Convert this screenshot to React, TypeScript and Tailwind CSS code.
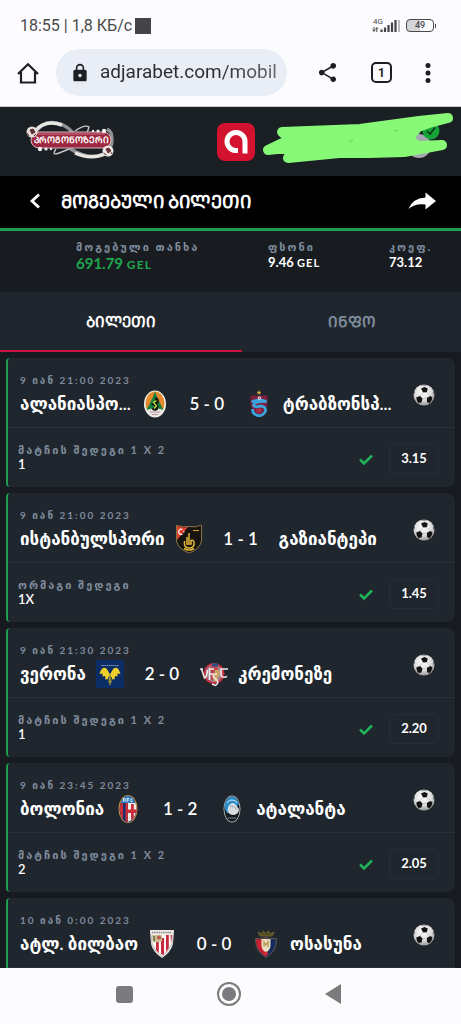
import * as React from "react";
import { useState } from "react";
import { MdLock, MdShare } from "react-icons/md";

interface Team {
  name: string;
  crest?: React.ReactNode;
}

interface Match {
  date: string;
  home: Team;
  away: Team;
  score: string;
  bet?: { market: string; pick: string; odds: string };
}

const Alanya = () => (
  <svg viewBox="0 0 28 28" className="h-7 w-7">
    <ellipse cx="14" cy="14" rx="11" ry="13.5" fill="#f4f4ee" />
    <ellipse cx="14" cy="13.500" rx="9.500" ry="12" fill="#e58a2c" />
    <path d="M5 19 Q14 15 23 19 Q20 27 14 27 Q8 27 5 19Z" fill="#e9e4e2" />
    <path d="M14 1.500 L16.500 8 L19 13 L22.500 20 Q14 16.500 5.500 20 L9 13 L11.500 8Z" fill="#177f3c" />
    <path d="M14 9 Q17 9 16 12 L13 14 Q17 16 15.500 18.500 Q13 20 11.800 18" fill="none" stroke="#161a12" strokeWidth="3.400" />
    <path d="M15.500 10.500 L12.500 12.500 L15.500 16 L13 18.500" fill="none" stroke="#c9dc3c" strokeWidth="1.300" />
    <path d="M9 22 h10 M11 24.500 h6" stroke="#b79c98" strokeWidth="1.200" />
  </svg>
);

const Trabzon = () => (
  <svg viewBox="0 0 28 28" className="h-7 w-7">
    <path d="M14 0 L14.700 1.800 L16.500 1.900 L15.100 3 L15.600 4.700 L14 3.700 L12.400 4.700 L12.900 3 L11.500 1.900 L13.300 1.800Z" fill="#d9a83a" />
    <path d="M5.500 6 Q9 4.500 14 6 Q19 4.500 22.500 6 V14 Q21 22 14 25 Q7 22 5.500 14Z" fill="#7c1f3c" />
    <path d="M6.500 12 Q13 8.500 21.500 11.500 Q10 11 8.500 15 Q10 18 15 16 Q21 16 20.500 21 Q18 26.500 12.500 25.500 Q7.500 24 7.500 19" fill="none" stroke="#3aa5dc" strokeWidth="2.800" />
    <path d="M11.500 20.500 Q14.500 18.500 16 20 Q15.500 23 11.500 21.500" fill="none" stroke="#c43a55" strokeWidth="1.200" />
    <circle cx="14.500" cy="8" r="1.800" fill="#e8dfe4" />
    <circle cx="14.700" cy="8" r=".8" fill="#b52743" />
  </svg>
);

const Istanbul = () => (
  <svg viewBox="0 0 28 28" className="h-7 w-7">
    <path d="M1.500 0 Q8 3 14 1.500 Q20 3 26.500 0 V16 Q25 24 14 28 Q3 24 1.500 16Z" fill="#17130f" stroke="#a58b52" strokeWidth=".8" />
    <path d="M2 .8 Q8 3.200 13 2 L2 15Z" fill="#e03c2c" />
    <path d="M7.500 4.500 A2.600 2.600 0 1 0 7.500 9" fill="none" stroke="#fff" strokeWidth="1.200" />
    <circle cx="8.800" cy="6.700" r=".8" fill="#fff" />
    <path d="M14 8 V18 M9.500 16 Q8.500 23 14 23 Q20 23 19 17 Q18 14.500 16 15.500 V19 H12 V12 M9 23.500 Q14 26.500 19 23.500" fill="none" stroke="#e1b83a" strokeWidth="1.500" />
    <path d="M18 5.500 h6" stroke="#c39a35" strokeWidth="1.200" />
  </svg>
);

const Verona = () => (
  <svg viewBox="0 0 28 28" className="h-7 w-7">
    <rect width="28" height="28" fill="#0c2c66" />
    <path d="M5 5.500 H23" stroke="#7d93ba" strokeWidth="1" strokeDasharray="1.500 .5" />
    <path d="M7 8 Q10 7 11.500 10 L14 14.500 L16.500 10 Q18 7 21 8 Q23 9 24.500 14 L21.500 13.500 L21.500 16.500 L19 16 L18.500 19.500 L16.500 19 L14 25.500 L11.500 19 L9.500 19.500 L9 16 L6.500 16.500 L6.500 13.500 L3.500 14 Q5 9 7 8Z" fill="#f0cf2a" />
    <path d="M14 15 V24 M12.500 17 v4 M15.500 17 v4" stroke="#344a4a" strokeWidth="1" />
  </svg>
);

const Cremonese = () => (
  <svg viewBox="0 0 28 28" className="h-7 w-7">
    <circle cx="14" cy="13.500" r="10.500" fill="#c92f45" />
    <circle cx="14" cy="13.500" r="8.500" fill="#9c8390" />
    <path d="M14 3 L10 8 L11 20 H18 V8Z" fill="#c04450" />
    <path d="M12 5 h6" stroke="#2a4d84" strokeWidth="3" />
    <path d="M15 10 Q20 9 20 14 L16 22 L13 20Z" fill="#cfa565" />
    <path d="M0 9 H3 M1.500 9 L4.500 18 Q7 17 7.500 10 M9.500 20 V9 H14 M9.500 14 h4 M28 9 H21 V15 Q22 18.500 27 16.500 M17 14 Q12 14 13.500 17 L17 20 Q19 23 15.500 25.500 L12 24" fill="none" stroke="#f2ece9" strokeWidth="1.500" />
  </svg>
);

const Bologna = () => (
  <svg viewBox="0 0 28 28" className="h-7 w-7">
    <ellipse cx="14" cy="14" rx="9.500" ry="14" fill="#c9974a" />
    <ellipse cx="14" cy="14" rx="8.500" ry="13.200" fill="#1c2f6c" />
    <path d="M6.500 8 H9 V24 Q6 20 5.600 15Z M11.500 8 H14 V27 L11.500 26Z" fill="#c22f3a" />
    <path d="M14 8 H21.500 Q24 16 19 24 L14 27Z" fill="#f0edea" />
    <path d="M17 9 h2.800 V23 L17 25Z M14 14.500 H22.500 V18 H14Z" fill="#c92f3a" />
    <path d="M7 8 Q9 1 14 1 Q19 1 21 8Z" fill="#2f7fc2" />
    <path d="M9.500 6.500 V3.500 h1.500 v3 M13 7 V3.500 h2 M13 5 h2 M18.500 4 h-1.500 v2.500 h1.500" fill="none" stroke="#e7f0f8" strokeWidth=".9" />
  </svg>
);

const Atalanta = () => (
  <svg viewBox="0 0 28 28" className="h-7 w-7">
    <ellipse cx="14" cy="14" rx="8.500" ry="13.500" fill="#b4b8bb" />
    <ellipse cx="14" cy="14" rx="7.600" ry="12.600" fill="#15191d" />
    <path d="M7 9 Q9 2 14 1.500 Q19 2 21 9 L18 13 Q12 11 10 19 Q5.500 14 7 9Z" fill="#2b8dca" />
    <path d="M9 8 Q11 4.500 14 5 Q18 5 19 8" fill="none" stroke="#d5e8f2" strokeWidth="1" />
    <path d="M10.500 11 Q14 6 17 9 L21 14 Q21 19 16 20 Q10 20 9.500 15Z" fill="#d8dcdf" />
    <path d="M12 11 Q16 10 19 15" fill="none" stroke="#8fa3b1" strokeWidth="1" />
    <path d="M10 23 h8" stroke="#a9adb0" strokeWidth="1.200" strokeDasharray="1.500 .6" />
  </svg>
);

const Bilbao = () => (
  <svg viewBox="0 0 28 28" className="h-7 w-7">
    <path d="M2 0 H26 L25 14 Q23 22 14 28 Q5 22 3 14Z" fill="#efebe7" />
    <path d="M4 5 H24 L23 14 Q21 21 14 25.500 Q7 21 5 14Z" fill="#fbfaf8" />
    <path d="M13 8 h3 v17 L13 24Z M18 5 h2.800 V18 L18 22Z M8 12 h2.800 v11 L8 20Z M22.500 5 H24 L23 14Z" fill="#c72a3c" />
    <path d="M4 5 H14 V11 Q10 13 4.800 12Z" fill="#c9bf9b" />
    <path d="M6 6 v5 M9 8 h4" stroke="#7f7b52" strokeWidth="2" />
    <circle cx="11" cy="7.500" r="2" fill="#c35b4a" />
    <path d="M4 2.500 H24" stroke="#8b8689" strokeWidth="1.300" strokeDasharray="1.500 .7" />
    <path d="M3 5 L4 14 Q7 22 14 26.500 Q21 22 24 14 L25 5" fill="none" stroke="#a09a9b" strokeWidth=".6" />
  </svg>
);

const Osasuna = () => (
  <svg viewBox="0 0 28 28" className="h-7 w-7">
    <path d="M6 2 L8 6 H20 L22 2 L18 4 L16.500 .8 L14 4 L11.500 .8 L10 4Z" fill="#4e4a20" stroke="#8a7931" strokeWidth=".7" />
    <path d="M3.500 8.500 Q9 9.500 14 7.500 Q19 9.500 24.500 8.500 Q25 21 14 27.500 Q3 21 3.500 8.500Z" fill="#162a60" stroke="#8f7b55" strokeWidth=".6" />
    <path d="M4 9 Q9 9.800 14 8 V27 Q3.500 20 4 9Z" fill="#c62031" />
    <path d="M9.500 9 H18.500 V16 Q18 20 14 22.500 Q10 20 9.500 16Z" fill="#e9dfc2" />
    <path d="M12 17 V12 L14 15 L16 11.500 V17" fill="none" stroke="#b29a55" strokeWidth="1.300" />
    <circle cx="14" cy="23.500" r="2" fill="#d6283a" />
  </svg>
);

const Ball = () => (
  <svg viewBox="0 0 22 22" className="mt-2.5 h-[22px] w-[22px] shrink-0">
    <defs>
      <radialGradient id="ball" cx=".45" cy=".35" r=".65">
        <stop offset="0" stopColor="#fff" />
        <stop offset=".6" stopColor="#dedede" />
        <stop offset="1" stopColor="#9b9b9b" />
      </radialGradient>
    </defs>
    <circle cx="11" cy="11" r="10.500" fill="url(#ball)" />
    <path d="M8 4.500 L11.500 3 L14.800 4.500 L13.800 8.300 L10 8.500Z M3.200 13.500 L7 12 L9.500 14.500 L8.500 18.500 L5.500 19 Q3.500 17 3.200 13.500Z M14 13.800 L17.500 12 L19.500 13.500 Q19 17 16.500 19.300 L14 18Z" fill="#141414" />
    <path d="M7.500 1.200 Q11 -.2 14.500 1.200 L11.500 1.500Z M.8 8 L1.600 6.500 L1.800 9 L.7 11Z M21.200 8 L20.500 7 L20.300 9.500 L21.300 11.500Z" fill="#4d4d4d" />
    <path d="M10 8.500 L7 12 M13.800 8.300 L17.500 12 M9.500 14.500 H14" stroke="#b5b5b5" strokeWidth=".6" />
  </svg>
);

const matches: Match[] = [
  {
    date: "9 იან 21:00 2023",
    home: { name: "ალანიასპო...", crest: <Alanya /> },
    away: { name: "ტრაბზონსპ...", crest: <Trabzon /> },
    score: "5 - 0",
    bet: { market: "მატჩის შედეგი 1 X 2", pick: "1", odds: "3.15" },
  },
  {
    date: "9 იან 21:00 2023",
    home: { name: "ისტანბულსპორი", crest: <Istanbul /> },
    away: { name: "გაზიანტეპი" },
    score: "1 - 1",
    bet: { market: "ორმაგი შედეგი", pick: "1X", odds: "1.45" },
  },
  {
    date: "9 იან 21:30 2023",
    home: { name: "ვერონა", crest: <Verona /> },
    away: { name: "კრემონეზე", crest: <Cremonese /> },
    score: "2 - 0",
    bet: { market: "მატჩის შედეგი 1 X 2", pick: "1", odds: "2.20" },
  },
  {
    date: "9 იან 23:45 2023",
    home: { name: "ბოლონია", crest: <Bologna /> },
    away: { name: "ატალანტა", crest: <Atalanta /> },
    score: "1 - 2",
    bet: { market: "მატჩის შედეგი 1 X 2", pick: "2", odds: "2.05" },
  },
  {
    date: "10 იან 0:00 2023",
    home: { name: "ატლ. ბილბაო", crest: <Bilbao /> },
    away: { name: "ოსასუნა", crest: <Osasuna /> },
    score: "0 - 0",
  },
];

const StatusBar = () => (
  <div className="flex h-[47px] shrink-0 items-center justify-between pt-1 pr-[25px] pl-5 text-[#4a4a4c]">
    <div className="flex items-center gap-[3px] font-[Roboto,sans-serif] text-base leading-5">
      <span>18:55 | 1,8 КБ/с</span>
      <span className="h-4 w-4 bg-[#444446]" />
    </div>
    <div className="flex items-center gap-1.5">
      <svg viewBox="0 0 28 16" className="h-4 w-7">
        <text x="1" y="6" fontSize="8" fontFamily="Roboto, sans-serif" fill="#4a4a4c">
          4G
        </text>
        <path d="M2 9 v4 M.6 11.500 L2 13.500 L3.400 11.500 M4.800 14 v-4 M3.700 11 L4.900 9.500 L6.200 11" fill="none" stroke="#4a4a4c" strokeWidth="1" />
        <path d="M9.500 14 v-2.500 M13 14 V9.500 M16.500 14 V7 M20 14 V4.500 M23.500 14 V2" stroke="#444446" strokeWidth="2.200" />
        <path d="M27 14 V2" stroke="#bcbcbf" strokeWidth="2" />
      </svg>
      <div className="flex items-center gap-px">
        <span className="flex h-[13px] w-7 items-center justify-center rounded border border-[#4a4a4c] bg-linear-to-r from-[#d6d6da] from-50% to-transparent to-50% font-[Roboto,sans-serif] text-[9px] font-medium">
          49
        </span>
        <span className="h-1 w-px bg-[#4a4a4c]" />
      </div>
    </div>
  </div>
);

const BrowserBar = () => (
  <div className="flex h-[60px] shrink-0 items-center border-b border-[#c9cbd0] pr-[21px] pb-2 pl-4 text-[#1d1e21]">
    <button type="button" aria-label="Home" className="mr-4">
      <svg viewBox="0 0 24 24" className="h-6 w-6" fill="none" stroke="currentColor" strokeWidth="2.200">
        <path d="M2 13 L12 3.200 L22 13 M5 11 V21.500 H19 V11" />
      </svg>
    </button>
    <div className="flex h-[47px] min-w-0 flex-1 items-center gap-2.5 rounded-full bg-[#e9edf6] pr-2.5 pl-3.5">
      <MdLock className="h-5 w-5 shrink-0" />
      <input
        aria-label="Address"
        defaultValue="adjarabet.com/mobile"
        className="w-0 min-w-0 flex-1 overflow-hidden bg-linear-to-r from-[#2b2c2f] from-65% to-[#6a6b70] bg-clip-text font-[Roboto,sans-serif] text-[19px] text-transparent outline-none"
      />
    </div>
    <button type="button" aria-label="Share" className="ml-[29px]">
      <MdShare className="h-[23px] w-[23px]" />
    </button>
    <button
      type="button"
      aria-label="Tabs"
      className="ml-8 flex h-[21px] w-[21px] items-center justify-center rounded-[5px] border-2 border-current font-[Roboto,sans-serif] text-xs font-bold"
    >
      1
    </button>
    <button type="button" aria-label="More" className="ml-6">
      <svg viewBox="0 0 24 24" className="h-6 w-6" fill="currentColor">
        <circle cx="12" cy="4.500" r="2.500" />
        <circle cx="12" cy="12" r="2.500" />
        <circle cx="12" cy="19.500" r="2.500" />
      </svg>
    </button>
  </div>
);

const PrognosisLogo = () => (
  <svg viewBox="0 0 92 40" className="h-10 w-[92px]">
    <path d="M9 14 Q20 -3 38 5 Q46 9 52 18 M44 28 Q62 40 78 35 Q90 28 86 13 Q85 11 82 9" fill="none" stroke="#8f9192" strokeWidth="3.500" />
    <path d="M10 11 Q20 -1 37 5 M50 33 Q66 40 79 34" fill="none" stroke="#e8e6e3" strokeWidth="3.500" />
    <path d="M50 11 Q60 4 64 7 L62 13 M31 29 Q26 36 34 33 L44 29" fill="none" stroke="#c7c5c4" strokeWidth="1.400" />
    <rect x="6" y="12" width="80" height="16" rx="8" fill="#9d2740" stroke="#d8b9bf" strokeWidth="1" />
    <path d="M12 14 H80" stroke="#bd5a6d" strokeWidth="1.500" />
    <g fill="#f0eaea">
      <circle cx="68" cy="11" r="1.200" />
      <circle cx="73" cy="11" r="1.600" />
      <circle cx="79" cy="11" r="2.200" />
      <circle cx="15" cy="29" r="2.200" />
      <circle cx="21" cy="29" r="1.600" />
      <circle cx="26" cy="29" r="1.200" />
    </g>
    <circle cx="7" cy="12" r="5.500" fill="#e6dedb" />
    <path d="M5 10 l3 -1 l2 3 l-3 2Z M2 13 l2 3 M9 16 l2 -2" fill="#5d2f31" stroke="#5d2f31" />
    <circle cx="83" cy="31" r="5.500" fill="#eee7e4" />
    <path d="M81 29 l3 -1 l2 3 l-3 2Z M78.500 33 l3 2 M86 34 l1 -2" fill="#6a3537" stroke="#6a3537" />
    <text x="46" y="23" textAnchor="middle" fontSize="9" fontWeight="700" fontFamily="Lato, DejaVu Sans, sans-serif" fill="#fff">
      ᲞᲠᲝᲒᲝᲜᲝᲖᲔᲠᲘ
    </text>
  </svg>
);

const SiteHeader = () => (
  <header className="flex h-[69px] shrink-0 items-center justify-between bg-[#1a1f24] pr-1.5 pl-[25px]">
    <a href="#" aria-label="პროგონოზერი" className="-mt-1">
      <PrognosisLogo />
    </a>
    <a href="#" aria-label="Adjarabet" className="ml-[94px]">
      <svg viewBox="0 0 38 38" className="h-[38px] w-[38px]">
        <rect width="38" height="38" rx="8" fill="#d3122f" />
        <path d="M28 30.500 V18.500 A9 9 0 1 0 19 27.500 H21" fill="none" stroke="#fff" strokeWidth="5" />
      </svg>
    </a>
    <button type="button" aria-label="Account" className="-mt-1">
      <svg viewBox="262 111 194 55" className="h-[55px] w-[194px]">
        <circle cx="420" cy="145" r="12" fill="#a3a7b1" />
        <circle cx="432" cy="130" r="8.500" fill="#14a336" />
        <path d="M428 130 L431 133 L436 126.500" fill="none" stroke="#14301c" strokeWidth="1.500" />
        <path
          d="M283 131 L361 128 L420 120 L449 117 L430 122 L419 126 L409 138 L419 145 L443 144 L405 151 L370 152 L340 152 L289 157 L296 146 L269 149 L292 138Z"
          fill="#88f877"
          stroke="#88f877"
          strokeWidth="10"
          strokeLinejoin="round"
        />
        <path d="M350 140.500 l4 -1 M395 129.500 h3" stroke="#5ebf55" strokeWidth=".8" />
      </svg>
    </button>
  </header>
);

const TitleBar = () => (
  <div className="flex h-[55px] shrink-0 items-center border-b-[3px] border-[#1f9d4d] bg-black pr-[25px] pb-0.5 pl-[29px] text-white">
    <button type="button" aria-label="უკან" className="mr-5">
      <svg viewBox="0 0 12 16" className="h-4 w-3" fill="none" stroke="currentColor" strokeWidth="2.800">
        <path d="M10 1.500 L3 8 L10 14.500" />
      </svg>
    </button>
    <h1 className="flex-1 text-[18px] leading-6 font-bold">ᲛᲝᲒᲔᲑᲣᲚᲘ ᲑᲘᲚᲔᲗᲘ</h1>
    <button type="button" aria-label="გაზიარება">
      <svg viewBox="0 0 28 18" className="h-[18px] w-7" fill="currentColor">
        <path d="M17.500 .5 L28 9 L17.500 17.500 V12.500 Q7 11 .5 17 Q4 6.500 17.500 5.500Z" />
      </svg>
    </button>
  </div>
);

const Summary = () => (
  <dl className="grid h-[61px] shrink-0 grid-cols-[192fr_121fr_72fr] bg-[#181c20] pt-2.5 pl-[76px] font-bold whitespace-nowrap text-white">
    <div>
      <dt className="text-[11px] leading-3 tracking-[2px] text-[#7e8b9c]">მოგებული თანხა</dt>
      <dd className="text-[15px] leading-5 text-[#1fa74f]">
        691.79 <span className="text-xs tracking-widest">GEL</span>
      </dd>
    </div>
    <div>
      <dt className="text-[11px] leading-3 tracking-[2px] text-[#7e8b9c]">ფსონი</dt>
      <dd className="text-[13px] leading-[18px]">
        9.46 <span className="text-[11px] tracking-widest">GEL</span>
      </dd>
    </div>
    <div>
      <dt className="text-[11px] leading-3 tracking-[2px] text-[#7e8b9c]">კოეფ.</dt>
      <dd className="text-[13px] leading-[18px]">73.12</dd>
    </div>
  </dl>
);

const MatchCard = ({ match }: { match: Match }) => (
  <li className="shrink-0 rounded-l rounded-r-lg border-l-2 border-[#1f9d4d] bg-[#20262d] text-white">
    <div className="flex items-start justify-between border-b border-[#293037] pt-4 pr-5 pb-1.5 pl-3">
      <div>
        <p className="text-[10px] leading-3 font-bold tracking-[2px] text-[#7e8b9c]">{match.date}</p>
        <div className="flex h-[35px] items-center text-[17px] font-semibold whitespace-nowrap">
          <span>{match.home.name}</span>
          {match.home.crest && <span className="ml-2.5">{match.home.crest}</span>}
          <span className="w-[76px] text-center">{match.score}</span>
          {match.away.crest && <span className="mr-2.5">{match.away.crest}</span>}
          <span>{match.away.name}</span>
        </div>
      </div>
      <Ball />
    </div>
    <div className="flex min-h-[59px] items-start pt-4 pr-4 pb-3 pl-2.5">
      {match.bet && (
        <>
          <div className="flex-1">
            <p className="text-[11px] leading-3 font-bold tracking-[2px] text-[#7e8b9c]">{match.bet.market}</p>
            <p className="text-[13px] leading-4 font-semibold">{match.bet.pick}</p>
          </div>
          <svg viewBox="0 0 14 12" className="mt-2.5 mr-4 h-3 w-3.5" fill="none" stroke="#1fb457" strokeWidth="2.500">
            <path d="M1 5.500 L5 9.500 L13 1.500" />
          </svg>
          <span className="flex h-[30px] w-[50px] items-center justify-center rounded border border-[#272d34] text-[13px] font-bold">
            {match.bet.odds}
          </span>
        </>
      )}
    </div>
  </li>
);

export default function App() {
  const [tab, setTab] = useState("ticket");

  return (
    <div className="flex h-screen flex-col overflow-hidden bg-[#fcfcfe] font-[Lato,'DejaVu_Sans',sans-serif]">
      <StatusBar />
      <BrowserBar />
      <SiteHeader />
      <TitleBar />
      <Summary />
      <nav className="grid h-[60px] shrink-0 grid-cols-[242fr_219fr] bg-[#20262d] text-[15px] font-bold">
        <button
          type="button"
          onClick={() => setTab("ticket")}
          className={tab === "ticket" ? "border-b-2 border-[#c8143a] text-white" : "border-b-2 border-transparent text-[#7e8b9c]"}
        >
          ᲑᲘᲚᲔᲗᲘ
        </button>
        <button
          type="button"
          onClick={() => setTab("info")}
          className={tab === "info" ? "border-b-2 border-[#c8143a] text-white" : "border-b-2 border-transparent text-[#7e8b9c]"}
        >
          ᲘᲜᲤᲝ
        </button>
      </nav>
      <main className="min-h-0 flex-1 overflow-hidden bg-[#171b1f] px-1.5 pt-1.5">
        <ul className="flex flex-col gap-1.5">
          {matches.map((match) => (
            <MatchCard key={match.date + match.home.name} match={match} />
          ))}
        </ul>
      </main>
      <div className="flex h-14 shrink-0 items-center justify-center gap-[84px] pr-1 pb-1 text-[#7b7b7d]">
        <button type="button" aria-label="Recent apps" className="h-[17px] w-[17px] rounded-[3px] bg-current" />
        <button type="button" aria-label="Home screen" className="flex h-6 w-6 items-center justify-center rounded-full border-2 border-current">
          <span className="h-3.5 w-3.5 rounded-full bg-current" />
        </button>
        <button type="button" aria-label="Back">
          <svg viewBox="0 0 16 20" className="h-5 w-4" fill="currentColor">
            <path d="M16 0 V20 L0 10Z" />
          </svg>
        </button>
      </div>
    </div>
  );
}
